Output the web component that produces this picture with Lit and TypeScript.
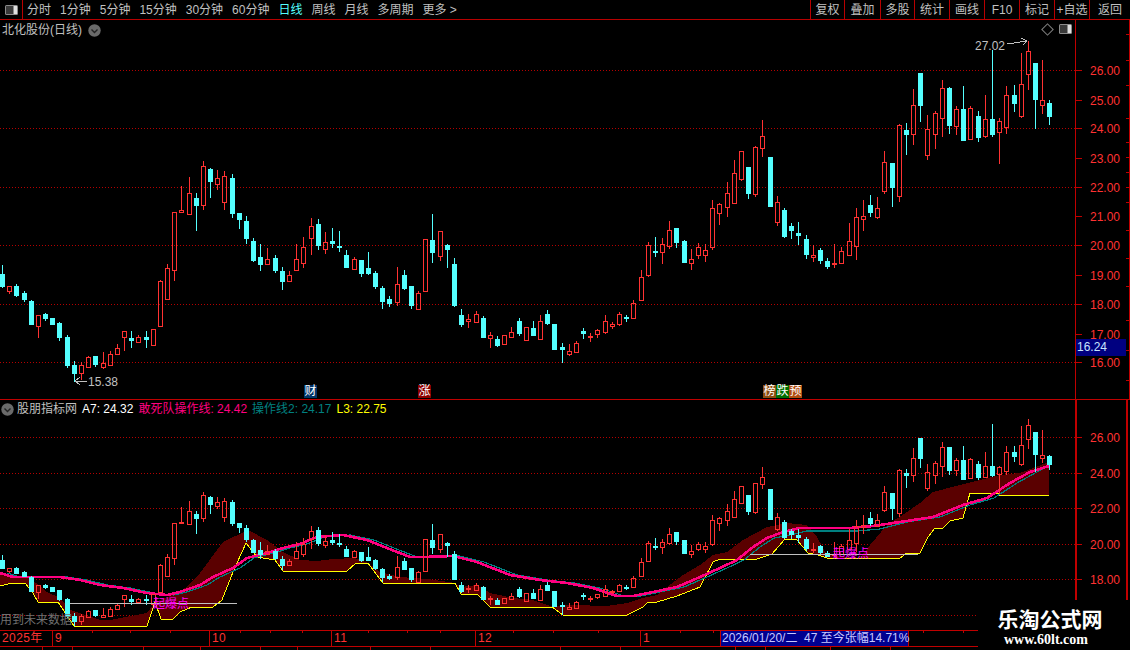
import { LitElement, html, css, svg } from "lit";
import { customElement } from "lit/decorators.js";

const R = "#ff3232", C = "#54ffff";
// [x, cyan?1:0, wickTop, bodyTop, bodyBottom, wickBottom] in top-pane pixel rows
const K: number[][] = [
[2,1,265,274,286,288],[9,0,286,286,291,294],[16,1,284,286,295,297],[24,1,291,293,299,302],[31,1,300,301,324,325],[38,0,315,315,326,338],[45,1,313,314,318,321],[52,1,318,318,324,324],[59,1,322,323,337,341],[67,1,335,337,365,368],
[74,1,361,365,373,382],[81,0,362,365,373,380],[88,0,356,357,367,367],[95,1,356,356,364,367],[103,0,352,363,367,369],[110,0,351,354,365,365],[117,0,344,348,354,355],[124,0,331,331,337,351],[131,1,331,338,340,348],[138,0,335,337,342,343],
[146,1,331,337,339,348],[153,0,329,329,345,346],[160,0,280,281,326,327],[167,0,264,268,299,299],[174,0,212,212,270,281],[181,0,186,210,212,212],[189,0,177,193,214,215],[196,1,193,198,205,231],[203,0,161,166,205,210],[210,1,168,169,181,198],
[217,0,170,178,184,190],[224,0,171,176,202,210],[232,1,174,178,213,218],[239,1,213,213,219,229],[246,1,216,221,238,244],[253,1,238,241,260,262],[260,1,244,257,264,271],[267,0,248,259,264,264],[275,1,255,258,270,273],[282,1,267,271,281,290],
[289,0,271,275,281,281],[296,0,244,259,270,270],[303,0,237,247,263,268],[311,0,218,226,238,255],[318,1,219,224,245,250],[325,0,232,242,249,254],[332,1,228,241,243,248],[339,1,231,246,247,252],[346,1,250,255,267,268],[354,0,257,259,269,269],
[361,1,260,260,273,277],[368,1,252,268,273,275],[375,1,271,273,286,289],[382,1,286,288,301,309],[389,1,296,299,303,307],[397,0,267,284,302,306],[404,1,270,275,288,290],[411,1,286,286,305,309],[418,0,291,293,309,309],[425,0,239,239,291,291],
[432,1,214,240,252,263],[440,0,231,231,256,261],[447,1,244,245,249,268],[454,1,258,264,305,307],[461,1,309,315,324,327],[468,0,314,319,321,328],[476,0,311,314,322,323],[483,1,316,318,337,338],[490,0,332,335,338,348],[497,1,336,339,345,347],
[504,0,335,335,344,345],[511,0,327,332,337,337],[519,1,318,321,333,336],[526,0,327,327,340,340],[533,1,321,328,335,335],[540,0,315,321,339,339],[547,1,310,314,323,325],[554,1,324,324,349,350],[562,1,343,347,349,363],[569,0,344,351,354,356],
[576,0,341,343,352,352],[583,1,328,331,333,339],[590,0,333,336,337,342],[597,0,329,330,334,338],[605,0,315,321,332,334],[612,0,322,324,326,329],[619,0,312,314,324,326],[626,1,315,317,318,322],[633,0,300,303,318,319],[641,0,270,277,300,301],
[648,0,242,245,275,277],[655,1,237,251,252,257],[662,0,238,244,252,264],[669,0,221,230,246,249],[676,1,228,228,242,248],[684,1,240,241,262,263],[691,0,249,259,263,270],[698,0,243,247,255,259],[705,0,244,250,255,262],[712,0,200,208,247,250],
[719,0,203,204,213,225],[727,0,182,193,207,217],[734,0,160,173,203,203],[741,0,151,151,179,181],[748,1,167,167,193,199],[755,0,146,147,194,197],[762,0,120,136,148,157],[770,1,157,157,206,206],[777,0,196,202,222,226],[784,1,208,210,236,238],
[791,1,223,226,230,239],[798,1,222,233,235,245],[806,1,235,239,254,259],[813,0,245,255,257,262],[820,1,248,250,260,264],[827,1,258,261,266,269],[834,0,244,263,264,268],[841,0,247,251,263,263],[849,0,223,241,255,255],[856,0,208,217,246,260],
[863,0,200,216,219,231],[870,1,195,205,212,217],[877,0,197,208,217,219],[884,0,151,162,191,194],[892,1,163,163,187,207],[899,0,124,125,196,202],[906,1,123,130,134,155],[913,0,89,105,134,145],[920,1,73,73,105,122],[927,0,115,129,155,160],
[935,0,111,113,134,149],[942,0,80,88,118,137],[949,1,87,88,125,134],[956,0,106,109,126,135],[963,1,86,109,140,141],[970,0,106,108,139,139],[978,1,111,116,137,142],[985,0,95,119,136,138],[992,1,50,119,134,137],[999,0,118,121,132,164],
[1006,0,86,95,127,134],[1014,1,85,95,103,112],[1021,0,53,84,116,118],[1028,0,41,51,74,90],[1035,1,63,63,99,129],[1042,0,60,100,105,114],[1049,1,100,103,116,125],
];

const yellow: number[][] = [[0,586],[8,584],[25,583],[33,593],[38,602],[58,602],[68,617],[74,626],[147,626],[155,602],[161,619],[173,619],[180,612],[192,607],[213,607],[222,600],[233,572],[246,543],[257,557],[275,560],[283,571],[347,571],[355,564],[368,563],[383,583],[455,583],[461,594],[477,594],[490,607],[552,607],[563,615],[627,615],[643,607],[648,602],[657,602],[677,596],[700,587],[713,562],[720,559],[757,559],[772,554],[785,539],[797,540],[808,553],[818,555],[827,558],[900,558],[907,553],[920,553],[928,537],[935,528],[943,528],[950,521],[963,518],[970,493],[998,493],[998,495],[1049,495]];
const bandTop: number[][] = [[0,573],[30,578],[47,592],[60,598],[70,610],[100,620],[110,620],[147,613],[155,602],[175,594],[187,587],[200,573],[223,542],[248,530],[267,540],[283,552],[300,560],[317,561],[333,559],[355,558],[368,563],[380,572],[400,577],[427,579],[455,583],[461,587],[477,585],[490,593],[513,598],[533,600],[550,606],[573,605],[607,606],[627,603],[643,598],[657,595],[667,587],[683,575],[700,565],[713,555],[727,552],[743,540],[767,527],[787,523],[807,525],[817,537],[827,555],[860,558],[870,545],[887,525],[907,512],[920,503],[933,492],[960,485],[980,480],[1000,475],[1020,473],[1049,462]];
const pink: number[][] = [[0,573],[13,577],[60,577],[80,580],[100,585],[123,588],[147,593],[167,595],[180,592],[200,585],[213,577],[233,568],[247,558],[267,553],[283,548],[300,544],[317,537],[343,535],[367,540],[387,548],[410,557],[423,557],[453,556],[477,562],[510,575],[540,580],[567,583],[593,588],[617,596],[633,596],[653,592],[677,587],[700,577],[720,568],[737,560],[753,547],[767,538],[783,532],[800,528],[827,528],[850,528],[873,526],[900,522],[933,517],[963,505],[987,498],[1010,483],[1030,472],[1049,466]];
// the slower line trails the fast one, and sits just under it along the flat stretch
const teal = pink.map(([x, y]) => [Math.min(x + 7, 1049), x > 780 && x < 880 ? y + 3 : y]);

const pts = (a: number[][]) => a.map((p) => p.join(",")).join(" ");
const band = pts(bandTop) + " " + pts([...yellow].reverse());

const candle = (k: number[], map: (y: number) => number) => {
  const [x, cy, w0, b0, b1, w1] = k;
  const [wt, bt, bb, wb] = [w0, b0, b1, w1].map((v) => Math.round(map(v)));
  const col = cy ? C : R;
  const h = Math.max(bb - bt, 1);
  return svg`
    ${wt < bt ? svg`<rect x=${x} y=${wt} width="1" height=${bt - wt} fill=${col}></rect>` : ""}
    ${wb > bb ? svg`<rect x=${x} y=${bb} width="1" height=${wb - bb} fill=${col}></rect>` : ""}
    ${cy
      ? svg`<rect x=${x - 2} y=${bt} width="5" height=${h + 1} fill=${col}></rect>`
      : svg`<rect x=${x - 1.5} y=${bt + 0.5} width="4" height=${h} fill="none" stroke=${col}></rect>`}
  `;
};

const dotted = (ys: number[], to = 1076) =>
  ys.map((y) => svg`<line class="dot" x1="0" x2=${to} y1=${y + 0.5} y2=${y + 0.5}></line>`);

const lowY = (y: number) => 437 + (y - 71) * 0.608;

const labels = (a: [string, number][]) =>
  a.map(([t, y]) => svg`
    <rect x="1076" y=${y} width="6" height="1" fill="#c00000"></rect>
    <text class="axis" x="1090" y=${y + 5}>${t}</text>`);

const chevron = html`<svg class="ball" width="13" height="13" viewBox="0 0 13 13">
  <circle cx="6.5" cy="6.5" r="6.2" fill="#6a6a6a"></circle>
  <path d="M3.5 5.5 L6.5 8.5 L9.5 5.5" fill="none" stroke="#222" stroke-width="1.4"></path>
</svg>`;

const panelIcon = html`<svg width="13" height="10" viewBox="0 0 13 10">
  <rect x="0" y="0" width="13" height="10" rx="1.5" fill="#8c8c8c"></rect>
  <rect x="1" y="1" width="7" height="8" fill="#3a3a3a"></rect>
  <rect x="9" y="1" width="3" height="8" fill="#e0e0e0"></rect>
</svg>`;

const periods = ["分时", "1分钟", "5分钟", "15分钟", "30分钟", "60分钟", "日线", "周线", "月线", "多周期", "更多 >"];
const tools: [string, number][] = [["复权", 34], ["叠加", 36], ["多股", 34], ["统计", 35], ["画线", 35], ["F10", 35], ["标记", 35], ["+自选", 35], ["返回", 41]];
const months: [string, number][] = [["2025年", 52], ["9", 157], ["10", 122], ["11", 144], ["12", 165], ["1", 490]];
const tickUp = [92, 130, 170, 240, 270, 302, 368, 407, 440, 513, 553, 598, 680, 713, 923, 963];
const tickDown = [42, 72, 143, 200, 260, 297, 370, 430, 560, 620, 735, 765, 830, 890];

@customElement("app-root")
export class AppRoot extends LitElement {
  static styles = css`
    :host {
      display: block;
      position: relative;
      width: 1130px;
      height: 650px;
      overflow: hidden;
      background: #000;
      color: #c0c0c0;
      font: 12px/16px "Liberation Sans", "Noto Sans CJK SC", sans-serif;
    }
    svg { display: block; }
    .toolbar {
      display: flex;
      align-items: stretch;
      height: 19px;
      border-bottom: 1px solid #b80000;
    }
    .menu { display: flex; align-items: center; justify-content: center; width: 22px; border-right: 1px solid #b80000; }
    .periods { display: flex; align-items: center; gap: 9px; padding-left: 4px; white-space: pre; }
    .active { color: #54ffff; }
    .tools { display: flex; margin-left: auto; }
    .tool { display: flex; align-items: center; justify-content: center; box-sizing: border-box; border-left: 1px solid #b80000; }
    .pane { position: relative; }
    .top { height: 379px; border-bottom: 1px solid #c00000; }
    .bottom { height: 230px; }
    .title { position: absolute; left: 2px; top: 2px; display: flex; align-items: center; gap: 6px; }
    .corner { position: absolute; left: 1043px; top: 4px; display: flex; align-items: center; gap: 6px; }
    .diamond { width: 7px; height: 7px; border: 1px solid #808080; transform: rotate(45deg); margin-right: 1px; }
    .flag { position: absolute; top: 365px; display: flex; color: #fff; line-height: 13px; }
    .flag span { width: 13px; height: 13px; text-align: center; font-size: 12px; }
    .cai { background: #003468; }
    .zhang { background: #8c0000; }
    .bang { background: #8c4c10; }
    .die { background: #006e00; }
    .yu { background: #b04c10; }
    .last {
      position: absolute; left: 1076px; top: 319px; width: 50px; height: 17px;
      background: #000080; color: #c8e4ff; line-height: 17px; padding-left: 1px; box-sizing: border-box;
    }
    .indic { position: absolute; left: 1px; top: 1px; display: flex; align-items: center; gap: 5px; white-space: pre; }
    .indic .ball { margin-right: -2px; }
    .a7 { color: #fff; }
    .dare { color: #ff0080; }
    .op { color: #008080; }
    .l3 { color: #ffff00; }
    .future { position: absolute; left: 0; top: 212px; color: #707070; }
    .burst { position: absolute; color: #ff00ff; }
    .b1 { left: 153px; top: 196px; }
    .b2 { left: 833px; top: 146px; }
    .dates {
      position: relative;
      display: flex;
      height: 15px;
      border-top: 1px solid #c00000;
      border-bottom: 1px solid #c00000;
      color: #ff3232;
      line-height: 15px;
    }
    .month { box-sizing: border-box; border-left: 1px solid #c00000; padding-left: 2px; letter-spacing: 0.4px; }
    .month:first-child { border-left: 0; }
    .ticks { position: absolute; left: 0; top: 0; }
    .tip {
      position: absolute; left: 720px; top: 0; width: 189px; height: 15px; box-sizing: border-box;
      background: #000090; border-left: 1px solid #c00000; border-right: 1px solid #c00000;
      color: #c8c8ff; white-space: pre; padding-left: 1px;
    }
    .foot { height: 3px; }
    .mark {
      position: absolute; left: 978px; top: 600px; width: 152px; height: 50px; background: #000;
      display: flex; flex-direction: column; align-items: center; color: #fff; box-sizing: border-box; padding: 5px 8px 0 0;
    }
    .cn { font: 700 21px/27px "Noto Sans CJK SC", sans-serif; }
    .en { font: 700 14px/16px "Liberation Serif", serif; margin-right: 8px; }
    .dot { stroke: #b40000; stroke-dasharray: 1 2; shape-rendering: crispEdges; }
    .axis { fill: #ff3232; font: 12px "Liberation Sans", sans-serif; }
    .note { fill: #c0c0c0; font: 12px "Liberation Sans", sans-serif; }
  `;

  private topPane() {
    const ylab: [string, number][] = [["26.00", 70], ["25.00", 100], ["24.00", 128], ["23.00", 158], ["22.00", 187], ["21.00", 216], ["20.00", 245], ["19.00", 275], ["18.00", 304], ["17.00", 334], ["16.00", 362]];
    const right = [34, 60, 85, 118, 142, 157, 172, 187, 202, 230, 258, 286, 320, 350, 380];
    return svg`<svg width="1130" height="379" viewBox="0 20 1130 379" shape-rendering="crispEdges">
      ${dotted([70, 128, 187, 245, 304, 362])}
      <rect x="1075" y="20" width="1" height="379" fill="#c00000"></rect>
      <rect x="1129" y="20" width="1" height="379" fill="#c00000"></rect>
      ${right.map((y) => svg`<rect x="1126" y=${y} width="4" height="1" fill="#c00000"></rect>`)}
      ${labels(ylab)}
      ${K.map((k) => candle(k, (y) => y))}
      <text class="note" x="975" y="50">27.02</text>
      <path d="M1007 44 L1027 41 M1021 38 L1027 41 L1023 45" fill="none" stroke="#c0c0c0"></path>
      <path d="M87 381 L75 381 M80 377 L75 381 L80 385" fill="none" stroke="#c0c0c0"></path>
      <text class="note" x="88" y="386">15.38</text>
    </svg>`;
  }

  private bottomPane() {
    const ylab: [string, number][] = [["26.00", 437], ["24.00", 473], ["22.00", 508], ["20.00", 544], ["18.00", 579]];
    return svg`<svg width="1130" height="230" viewBox="0 400 1130 230" shape-rendering="crispEdges">
      ${dotted([437, 473, 508, 544, 579, 615])}
      <rect x="1075" y="400" width="2" height="200" fill="#c00000"></rect>
      <rect x="1126" y="400" width="2" height="200" fill="#c00000"></rect>
      ${labels(ylab)}
      <polygon points=${band} fill="#5a0000"></polygon>
      <polyline points=${pts(yellow)} fill="none" stroke="#ffff00"></polyline>
      <polyline points=${pts(teal)} fill="none" stroke="#008080" stroke-width="1.2"></polyline>
      <polyline points=${pts(pink)} fill="none" stroke="#ff0080" stroke-width="2.6"></polyline>
      ${K.map((k) => candle(k, lowY))}
      <rect x="70" y="603" width="167" height="1" fill="#c0c0c0"></rect>
      <rect x="750" y="554" width="168" height="1" fill="#c0c0c0"></rect>
    </svg>`;
  }

  render() {
    return html`
      <div class="toolbar">
        <div class="menu">${panelIcon}</div>
        <div class="periods">
          ${periods.map((p) => html`<span class=${p === "日线" ? "active" : ""}>${p}</span>`)}
        </div>
        <div class="tools">
          ${tools.map(([t, w]) => html`<div class="tool" style="width:${w}px">${t}</div>`)}
        </div>
      </div>
      <div class="pane top">
        ${this.topPane()}
        <div class="title"><span>北化股份(日线)</span>${chevron}</div>
        <div class="corner"><div class="diamond"></div>${panelIcon}</div>
        <div class="flag" style="left:304px"><span class="cai">财</span></div>
        <div class="flag" style="left:418px"><span class="zhang">涨</span></div>
        <div class="flag" style="left:763px"><span class="bang">榜</span><span class="die">跌</span><span class="yu">预</span></div>
        <div class="last">16.24</div>
      </div>
      <div class="pane bottom">
        ${this.bottomPane()}
        <div class="indic">
          ${chevron}<span>股朋指标网</span><span class="a7">A7: 24.32</span><span class="dare">敢死队操作线: 24.42</span><span class="op">操作线2: 24.17</span><span class="l3">L3: 22.75</span>
        </div>
        <div class="future">用到未来数据</div>
        <div class="burst b1">起爆点</div>
        <div class="burst b2">起爆点</div>
      </div>
      <div class="dates">
        ${months.map(([t, w]) => html`<div class="month" style="width:${w}px">${t}</div>`)}
        <svg class="ticks" width="1130" height="15" shape-rendering="crispEdges">
          ${tickUp.map((x) => svg`<rect x=${x} y="0" width="1" height="2" fill="#c00000"></rect>`)}
        </svg>
        <div class="tip">2026/01/20/二  47 至今张幅14.71%</div>
      </div>
      <svg class="foot" width="1130" height="3" shape-rendering="crispEdges">
        ${tickDown.map((x) => svg`<rect x=${x} y="0" width="1" height="3" fill="#c00000"></rect>`)}
      </svg>
      <div class="mark">
        <div class="cn">乐淘公式网</div>
        <div class="en">www.60lt.com</div>
      </div>
    `;
  }
}
